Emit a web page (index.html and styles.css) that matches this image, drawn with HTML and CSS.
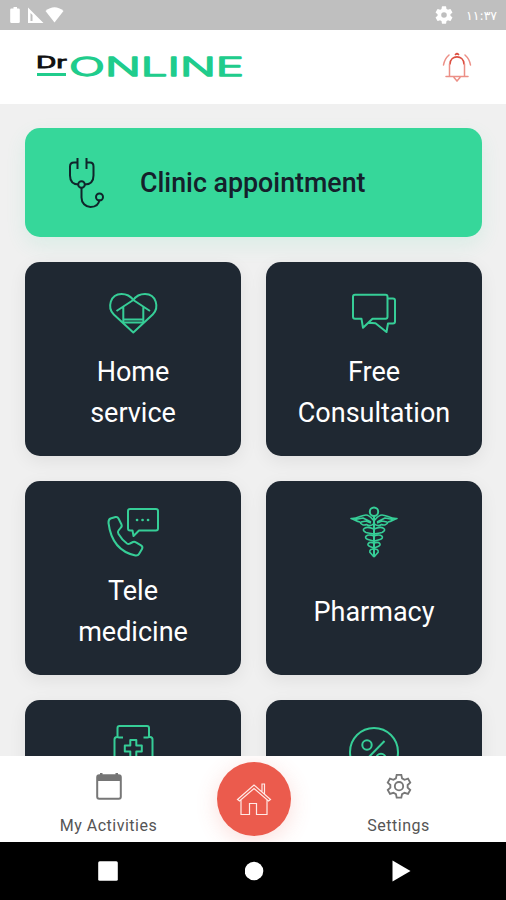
FILE: index.html
```html
<!DOCTYPE html>
<html lang="en">
<head>
    <meta charset="UTF-8">
    <meta name="viewport" content="width=device-width, initial-scale=1.0">
    <title>Dr Online</title>
    <link rel="stylesheet" href="styles.css">
</head>
<body>
    <!-- Status bar -->
    <div class="status-bar">
        <svg class="status-icons" width="60" height="30" viewBox="0 0 60 30">
            <path d="M4 8.500h1.500V7h3.500v1.500h1.500q1.300 0 1.300 1.300v12q0 1.200-1.300 1.200H3.500q-1.300 0-1.300-1.200v-12q0-1.300 1.300-1.300z"/>
            <path fill-rule="evenodd" d="M20 7.500 35.500 23H20zM22.500 13v8h2v-6z"/>
            <path d="M37.500 11Q46.500 3.500 55.500 11L46.500 22.500z"/>
        </svg>
        <div class="status-right">
            <svg width="18" height="18" viewBox="2 2 20 20"><path d="M19.140 12.940c.04-.3.06-.61.06-.94s-.02-.64-.07-.94l2.030-1.580a.49.49 0 0 0 .12-.61l-1.920-3.320a.49.49 0 0 0-.59-.22l-2.390.96a7 7 0 0 0-1.620-.94l-.36-2.540a.48.48 0 0 0-.48-.41h-3.840a.48.48 0 0 0-.47.41l-.36 2.540a7.300 7.300 0 0 0-1.620.94l-2.390-.96a.48.48 0 0 0-.59.22L2.740 8.870a.48.48 0 0 0 .12.610l2.030 1.580a6 6 0 0 0 0 1.880l-2.030 1.580a.49.49 0 0 0-.12.610l1.920 3.320c.12.22.37.29.59.22l2.390-.96c.5.38 1.030.7 1.620.94l.36 2.540c.05.24.24.41.48.41h3.840c.24 0 .44-.17.47-.41l.36-2.540a7 7 0 0 0 1.620-.94l2.390.96c.22.08.47 0 .59-.22l1.920-3.320a.48.48 0 0 0-.12-.61zM12 15.100a3.100 3.100 0 1 1 0-6.200 3.100 3.100 0 0 1 0 6.200z"/></svg>
            <span class="time">١١:٣٧</span>
        </div>
    </div>

    <!-- Header -->
    <header class="header">
        <svg class="logo" width="206" height="24" viewBox="0 0 206 24">
            <text class="logo-dr" x="-1" y="13" textLength="31" lengthAdjust="spacingAndGlyphs">Dr</text>
            <path class="logo-line" d="M0 19.500h29"/>
            <text class="logo-online" x="32" y="20.500" textLength="175" lengthAdjust="spacingAndGlyphs">ONLINE</text>
        </svg>
        <svg class="bell" width="30" height="30" viewBox="0 0 30 30">
            <path class="bell-top" d="M8 12C8.500 2.500 21.500 2.500 22 12M13.500 2.500q1.500-1.500 3 0"/>
            <path class="bell-body" d="M1.500 13Q2.500 7 7 3M28.500 13Q27.500 7 23 3M7.500 12v12M22.500 12v12M4 24.500h22M12 25.500l3 3.500 3-3.500"/>
        </svg>
    </header>

    <main class="content">
        <div class="clinic">
            <svg class="clinic-icon" width="38" height="54" viewBox="0 0 38 54">
                <path d="M10.500 2v11M19.500 2v11M10.500 6.500H7Q3 6.500 3 10.500v9q0 9 9 9M19.500 6.500H23q3.500 0 3.500 4v9q0 9-9 9M14.500 32v9.500c0 5.500 4 9.500 9 9.500 5.500 0 8.500-3 9-7.500"/>
                <circle cx="14.500" cy="28.500" r="3.300"/>
                <circle cx="32.500" cy="41" r="3.500"/>
            </svg>
            <span>Clinic appointment</span>
        </div>

        <div class="cards">
            <div class="card">
                <svg class="card-icon" viewBox="0 0 62 62">
                    <path d="M31.300 50.500 11.800 32.500C5 26 8 12 19.500 12c5 0 9 2 11.800 6C34 14 38 12 43 12c11.500 0 14.500 14 7.700 20.500z"/>
                    <path d="M14.500 29 31.300 18 48 29M21.300 25v15.500h20V25M21.300 37.500h20"/>
                </svg>
                <div class="card-title">Home<br>service</div>
            </div>
            <div class="card">
                <svg class="card-icon" viewBox="0 0 62 62">
                    <path d="M12 12.800h30.500q2 0 2 2v20q0 2-2 2H29.500l-9.500 9-1.500-9H12q-2 0-2-2v-20q0-2 2-2zM44.500 16.500h5.500q2 0 2 2v21q0 2-2 2h-5l-1.500 8.500-11-8.700-7-.5"/>
                </svg>
                <div class="card-title">Free<br>Consultation</div>
            </div>
            <div class="card">
                <svg class="card-icon" viewBox="0 0 62 62">
                    <path d="M28 8h26q2 0 2 2v17.500q0 2-2 2H37l-5.500 5.500-1-5.500H28q-2 0-2-2V10q0-2 2-2z"/>
                    <path d="M8.500 17.500 13.500 16q2-.5 3 1.500l3 6q.8 2-1 3.500l-2 2.500q-1.200 1.500 0 3.500 3.500 6 8.500 9.500 1.500 1 3 0l3-1.500q1.500-.6 3 .4l5 3q2.200 1.500 1 3.600l-3 5q-1 1.800-3.500 1.500Q10 49.500 6.500 22q-.2-3.500 2-4.500z"/>
                    <path class="dots" d="M35 19h.1M40.500 19h.1M46 19h.1"/>
                </svg>
                <div class="card-title">Tele<br>medicine</div>
            </div>
            <div class="card">
                <svg class="card-icon" viewBox="0 0 62 62">
                    <circle cx="31" cy="10.700" r="4.200"/>
                    <path d="M31 15v41"/>
                    <g class="thin">
                        <path id="wing" d="M31 20c-2-2-4-6-8-6-5 0-8 4-15 3.500 4 1 5 3 9 3.500 1 3 4 3.500 6.500 2.500 2 1.500 5 1.500 7.500-1M12 18.500l8-1.500 8 4M18 21l5-1 5 2M31 28c-9-4-14 1-8 3.500 5 1.500 8 .5 8 2.500M31 35c-8-3-11 2-6 3.500 4 1.500 6 .5 6 2.500M31 42c-6-2-8 2-4 3.500 3 1.500 4 .5 4 2.500M31 48c-5 0-5 3-3 4.500l3 3.500"/>
                        <use href="#wing" transform="matrix(-1 0 0 1 62 0)"/>
                    </g>
                </svg>
                <div class="card-title">Pharmacy</div>
            </div>
            <div class="card">
                <svg class="card-icon" viewBox="0 0 62 62">
                    <path d="M21 17.500h-4q-1.500 0-1.500-1.500V8q0-2 2-2h27.500q2 0 2 2v8q0 1.500-1.500 1.500h-4M16 17h-1q-2.500 0-2.500 2.500V54q0 3 3 3h32q3 0 3-3V19.500q0-2.500-2.500-2.500h-1"/>
                    <path d="M28.300 20h6v5.500h5.500v6h-5.500V37h-6v-5.500h-5.500v-6h5.500z"/>
                </svg>
            </div>
            <div class="card">
                <svg class="card-icon" viewBox="0 0 62 62">
                    <circle cx="31" cy="32" r="24"/>
                    <circle cx="24" cy="25" r="4.700"/>
                    <circle cx="38" cy="38.500" r="4.700"/>
                    <path d="M41.500 21 21 42"/>
                </svg>
            </div>
        </div>
    </main>

    <!-- Bottom navigation -->
    <nav class="tabs">
        <div class="tab">
            <svg width="26" height="28" viewBox="0 0 26 28">
                <rect class="tab-line" x="1.200" y="3.200" width="23.600" height="23.600" rx="2"/>
                <path class="tab-fill" d="M1 3h24v6H1zM4 1h2.500v3H4zM19.500 1H22v3h-2.500z"/>
            </svg>
            <span>My Activities</span>
        </div>
        <div class="home-button">
            <svg width="36" height="36" viewBox="0 0 36 36">
                <path d="M1.500 18.500 18 4l16.500 14.500-2 1.500L18 7.500 3.500 20zM5 19v14.500h8.500v-11h7v11H31V19M26 10.500V3h2.500v10"/>
            </svg>
        </div>
        <div class="tab">
            <svg width="26" height="28" viewBox="0 0 28 28">
                <path class="tab-line" d="M11.500 2h5l.8 3.800 2.700 1.500 3.700-1.200 2.400 4.200-2.800 2.600v2.800l2.800 2.600-2.400 4.200-3.700-1.200-2.700 1.500-.8 3.700h-5l-.8-3.700L8 21.300l-3.700 1.200-2.400-4.200 2.800-2.600v-2.800l-2.800-2.600 2.400-4.200L8 7.300l2.700-1.500z"/>
                <circle class="tab-line" cx="14" cy="14.200" r="4.500"/>
            </svg>
            <span>Settings</span>
        </div>
    </nav>

    <!-- System buttons -->
    <div class="system-bar">
        <svg width="20" height="20" viewBox="0 0 20 20"><rect x=".2" y=".2" width="19.600" height="19.600" rx="1.500"/></svg>
        <svg width="20" height="20" viewBox="0 0 20 20"><circle cx="9" cy="10" r="9.300"/></svg>
        <svg width="20" height="22" viewBox="0 0 20 22"><path d="M1.500.5v21L19.500 11z"/></svg>
    </div>
</body>
</html>
```
FILE: styles.css
```css
* {
    box-sizing: border-box;
}
body {
    margin: 0;
    width: 506px;
    height: 900px;
    overflow: hidden;
    display: flex;
    flex-direction: column;
    background: #f0f0f0;
    font-family: Roboto, "Noto Sans", sans-serif;
}
svg {
    display: block;
    flex: none;
}
.status-bar {
    height: 30px;
    flex: none;
    display: flex;
    align-items: center;
    justify-content: space-between;
    padding: 0 9px 0 8px;
    background: #bfbfbf;
    color: #fff;
    fill: #fff;
}
.status-right {
    display: flex;
    align-items: center;
    gap: 13px;
}
.time {
    width: 31px;
    font-family: "DejaVu Sans", sans-serif;
    font-size: 12.5px;
    direction: ltr;
    unicode-bidi: bidi-override;
    white-space: nowrap;
}
.header {
    height: 74px;
    flex: none;
    display: flex;
    align-items: center;
    justify-content: space-between;
    padding: 0 34px 0 37px;
    background: #fff;
}
.logo {
    overflow: visible;
}
.logo-dr {
    font: 400 16px Inter, sans-serif;
    fill: #111;
    stroke: #111;
    stroke-width: 0.8;
}
.logo-online {
    font: 300 25.5px Inter, sans-serif;
    fill: #20cc8c;
    stroke: #20cc8c;
    stroke-width: 1.3;
    stroke-linejoin: round;
}
.logo-line {
    stroke: #20cc8c;
    stroke-width: 3;
}
.bell {
    fill: none;
    stroke-linecap: round;
}
.bell-top {
    stroke: #dc4f41;
    stroke-width: 1.7;
}
.bell-body {
    stroke: #ec8f86;
    stroke-width: 1.5;
}
.content {
    flex: 1;
    min-height: 0;
    overflow: hidden;
    padding: 24px 24px 0 25px;
}
.clinic {
    height: 109px;
    margin-bottom: 25px;
    padding-left: 42px;
    display: flex;
    align-items: center;
    gap: 35px;
    border-radius: 15px;
    background: #36d79a;
    box-shadow: 0 8px 20px rgba(54, 215, 154, 0.12);
    color: #15202b;
    font-size: 26.8px;
    font-weight: 500;
}
.clinic-icon {
    fill: none;
    stroke: #10252b;
    stroke-width: 2;
}
.cards {
    display: grid;
    grid-template-columns: 216px 216px;
    grid-auto-rows: 194px;
    gap: 25px;
}
.card {
    display: flex;
    flex-direction: column;
    align-items: center;
    padding-top: 20px;
    border-radius: 15px;
    background: #1f2832;
    box-shadow: 0 5px 18px rgba(0, 0, 0, 0.07);
}
.card-icon {
    width: 62px;
    height: 62px;
    fill: none;
    stroke: #36ce97;
    stroke-width: 2;
    stroke-linejoin: round;
}
.thin {
    stroke-width: 1.6;
}
.dots {
    stroke-width: 2.6;
    stroke-linecap: round;
}
.card-title {
    height: 82px;
    margin-top: 8px;
    display: flex;
    align-items: center;
    text-align: center;
    color: #fff;
    font-size: 27px;
    line-height: 41px;
}
.tabs {
    height: 86px;
    flex: none;
    display: flex;
    justify-content: space-between;
    padding: 6px 36px 0 37px;
    background: #fff;
    overflow: hidden;
}
.tab {
    width: 143px;
    padding-top: 10px;
    display: flex;
    flex-direction: column;
    align-items: center;
    gap: 16px;
    color: #555;
    font-size: 16px;
    line-height: 19px;
    letter-spacing: 0.5px;
}
.tab-line {
    fill: none;
    stroke: #777;
    stroke-width: 2;
}
.tab-fill {
    fill: #757575;
}
.home-button {
    width: 74px;
    height: 74px;
    display: flex;
    align-items: center;
    justify-content: center;
    border-radius: 50%;
    background: #eb5b4d;
    box-shadow: 0 5px 22px rgba(235, 91, 77, 0.2);
}
.home-button svg {
    fill: none;
    stroke: #ffe9e6;
    stroke-width: 1.2;
}
.system-bar {
    height: 58px;
    flex: none;
    display: flex;
    align-items: center;
    justify-content: space-between;
    padding: 0 95px 0 98px;
    background: #000;
    fill: #fff;
}
```
